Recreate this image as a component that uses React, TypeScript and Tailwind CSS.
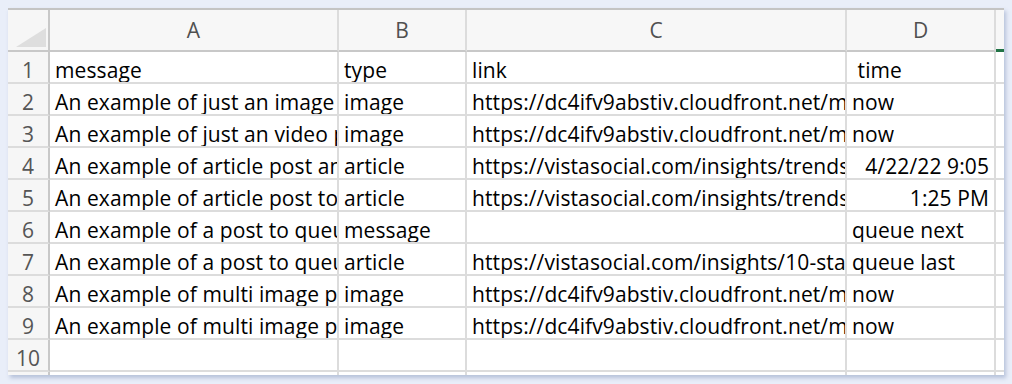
import React from "react";

type Row = { a: string; b: string; c: string; d: string; dRight?: boolean };

const rows: Row[] = [
  { a: "message", b: "type", c: "link", d: " time" },
  { a: "An example of just an image post", b: "image", c: "https://dc4ifv9abstiv.cloudfront.net/media/image.jpg", d: "now" },
  { a: "An example of just an video post", b: "image", c: "https://dc4ifv9abstiv.cloudfront.net/media/video.mp4", d: "now" },
  { a: "An example of article post and image", b: "article", c: "https://vistasocial.com/insights/trends-2022", d: "4/22/22 9:05", dRight: true },
  { a: "An example of article post to schedule", b: "article", c: "https://vistasocial.com/insights/trends-2022", d: "1:25 PM", dRight: true },
  { a: "An example of a post to queue next", b: "message", c: "", d: "queue next" },
  { a: "An example of a post to queue last", b: "article", c: "https://vistasocial.com/insights/10-stats", d: "queue last" },
  { a: "An example of multi image post", b: "image", c: "https://dc4ifv9abstiv.cloudfront.net/media/multi.jpg", d: "now" },
  { a: "An example of multi image post", b: "image", c: "https://dc4ifv9abstiv.cloudfront.net/media/multi2.jpg", d: "now" },
  { a: "", b: "", c: "", d: "" },
  { a: "", b: "", c: "", d: "" },
];

const font = { fontFamily: "'Open Sans', Lato, sans-serif" };

function Cell({ text, right }: { text: string; right?: boolean }) {
  return (
    <div
      className={`h-[32px] border-r-2 border-b-2 border-[#dcdcdc] bg-white overflow-hidden whitespace-pre flex items-end pb-0 text-[21px] tracking-[0.1px] leading-[24px] text-black ${
        right ? "justify-end pr-[5px]" : "pl-[5px]"
      }`}
    >
      {text}
    </div>
  );
}

export default function App() {
  return (
    <div className="w-[1012px] h-[384px] bg-[#e9eef9] pl-[8px] pt-[8px] overflow-hidden" style={font}>
      <div className="w-[996px] h-[367px] bg-white overflow-hidden shadow-[2px_3px_4px_rgba(120,140,180,0.45)] border-t-2 border-[#c4c4c4]">
        <div className="grid grid-cols-[42px_289px_128px_380px_149px_8px]">
          <div className="h-[42px] bg-[#f6f6f6] border-r-2 border-b-2 border-[#c8c8c8] relative">
            <svg className="absolute left-[8px] top-[18px]" width="31" height="19" viewBox="0 0 31 19">
              <polygon points="0,19 30,19 30,0" fill="#dedede" />
            </svg>
          </div>
          {["A", "B", "C", "D"].map((l) => (
            <div
              key={l}
              className="h-[42px] bg-[#f7f7f7] border-r-2 border-b-2 border-[#c8c8c8] border-r-[#dcdcdc] flex items-center justify-center pt-[2px] text-[21px] text-[#505050]"
            >
              {l}
            </div>
          ))}
          <div className="h-[42px] bg-[#f7f7f7] border-b-2 border-[#c8c8c8] relative">
            <div className="absolute left-0 bottom-[-2px] w-[8px] h-[3px] bg-[#217346]" />
          </div>

          {rows.map((r, i) => (
            <React.Fragment key={i}>
              <div className="h-[32px] bg-[#f6f6f6] border-r-2 border-b-2 border-[#c8c8c8] border-b-[#dcdcdc] flex items-end justify-center pb-0 text-[21px] leading-[24px] text-[#555555]">
                {i + 1}
              </div>
              <Cell text={r.a} />
              <Cell text={r.b} />
              <Cell text={r.c} />
              <Cell text={r.d} right={r.dRight} />
              <div className="h-[32px] border-b-2 border-[#dcdcdc] bg-white" />
            </React.Fragment>
          ))}
        </div>
      </div>
    </div>
  );
}
